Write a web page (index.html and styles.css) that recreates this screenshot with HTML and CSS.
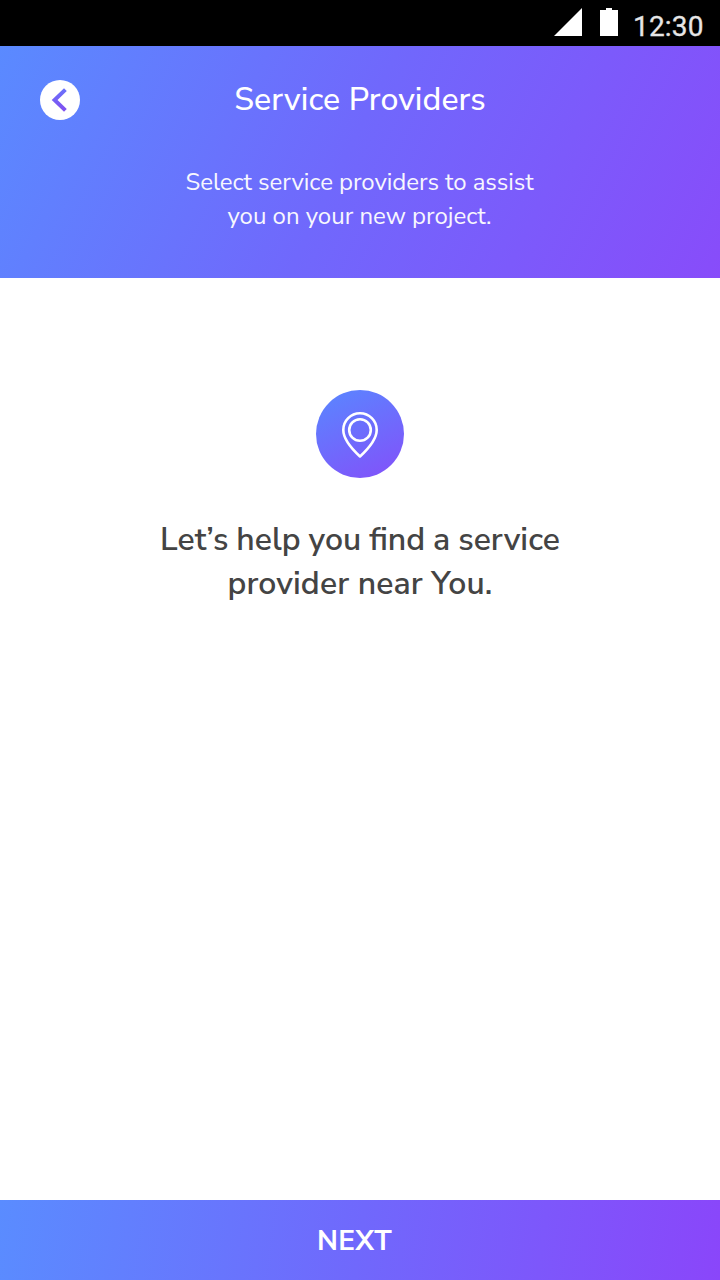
FILE: index.html
```html
<!DOCTYPE html>
<html lang="en">
<head>
<meta charset="utf-8">
<title>Service Providers</title>
<link rel="stylesheet" href="styles.css">
</head>
<body>
<div class="screen">
  <div class="status-bar">
    <svg class="status-icons" width="64" height="28" viewBox="0 0 64 28" fill="#fff">
      <path d="M28 0V28H0Z"/>
      <path d="M46 2h6V0h6v2h6v26H46Z"/>
    </svg>
    <span class="clock">12:30</span>
  </div>
  <header class="header">
    <div class="title-row">
      <button class="back" aria-label="Back">
        <svg width="40" height="40" viewBox="0 0 40 40">
          <defs><linearGradient id="arrow" x1="0" y1="0" x2="0" y2="1"><stop stop-color="#6a70fb"/><stop offset="1" stop-color="#8050f0"/></linearGradient></defs>
          <circle cx="20" cy="20" r="20" fill="#fff"/>
          <path d="M25.4 9.6 14.6 20 25.4 30.4" fill="none" stroke="url(#arrow)" stroke-width="4"/>
        </svg>
      </button>
      <h1 class="title">Service Providers</h1>
    </div>
    <p class="subtitle"><span class="subtitle-lead">Select service providers to assist</span><br>you on your new project.</p>
  </header>
  <main class="content">
    <svg class="pin" width="88" height="88" viewBox="0 0 88 88">
      <defs><linearGradient id="disc" x1=".25" y1="0" x2=".75" y2="1"><stop stop-color="#5c83ff"/><stop offset="1" stop-color="#8054fa"/></linearGradient></defs>
      <circle cx="44" cy="44" r="44" fill="url(#disc)"/>
      <g fill="none" stroke="#fff" stroke-width="2.6" stroke-linejoin="round">
        <path d="M44 66.5C37 60 27.3 49 27.3 40A16.7 16.7 0 0 1 60.7 40C60.7 49 51 60 44 66.5Z"/>
        <circle cx="44" cy="40" r="10.8"/>
      </g>
    </svg>
    <h2 class="message"><span class="message-lead">Let’s help you find a service</span><br><span class="message-end">provider near You.</span></h2>
  </main>
  <button class="next"><span class="next-label">NEXT</span></button>
</div>
</body>
</html>
```

FILE: styles.css
```css
* { box-sizing: border-box; }
body { margin: 0; font-family: "Nunito Sans", Nunito, Lato, sans-serif; }
button { border: 0; padding: 0; font-family: inherit; }
h1, h2, p { margin: 0; }
svg { display: block; }
.screen { width: 720px; height: 1280px; display: flex; flex-direction: column; background: #fff; }
.status-bar { height: 46px; padding: 8px 16px 0 0; background: #000; display: flex; justify-content: flex-end; gap: 15px; }
.status-icons { flex: none; }
.clock { width: 71px; font: 400 28px/37px Roboto, sans-serif; color: #e6e6e6; letter-spacing: 0.2px; -webkit-text-stroke: 0.3px #e6e6e6; }
.header { height: 232px; padding-top: 34px; color: #fff; background: linear-gradient(116deg, #5a8aff 0%, #7068fc 48%, #884cfa 100%); }
.title-row { display: grid; grid-template-columns: 40px 1fr 40px; padding: 0 40px; align-items: center; height: 40px; }
.back { width: 40px; height: 40px; background: none; }
.title { font-size: 32px; line-height: 40px; font-weight: 500; text-align: center; letter-spacing: 0.1px; }
.subtitle { margin-top: 45px; padding-right: 1px; font-size: 24px; line-height: 34px; font-weight: 400; text-align: center; opacity: .95; }
.subtitle-lead { letter-spacing: -0.05px; }
.content { flex: 1; display: flex; flex-direction: column; align-items: center; padding-top: 112px; }
.message { margin-top: 40px; font-size: 32px; line-height: 44px; font-weight: 600; color: #444; text-align: center; }
.message-lead { word-spacing: -0.5px; }
.message-end { letter-spacing: 0.1px; }
.next { height: 80px; padding: 2px 11px 0 0; color: #fff; background: linear-gradient(98deg, #5a8cff 0%, #7068fc 50%, #8a46fa 100%); }
.next-label { font-size: 28px; line-height: 40px; font-weight: 700; letter-spacing: 0.3px; }
```
